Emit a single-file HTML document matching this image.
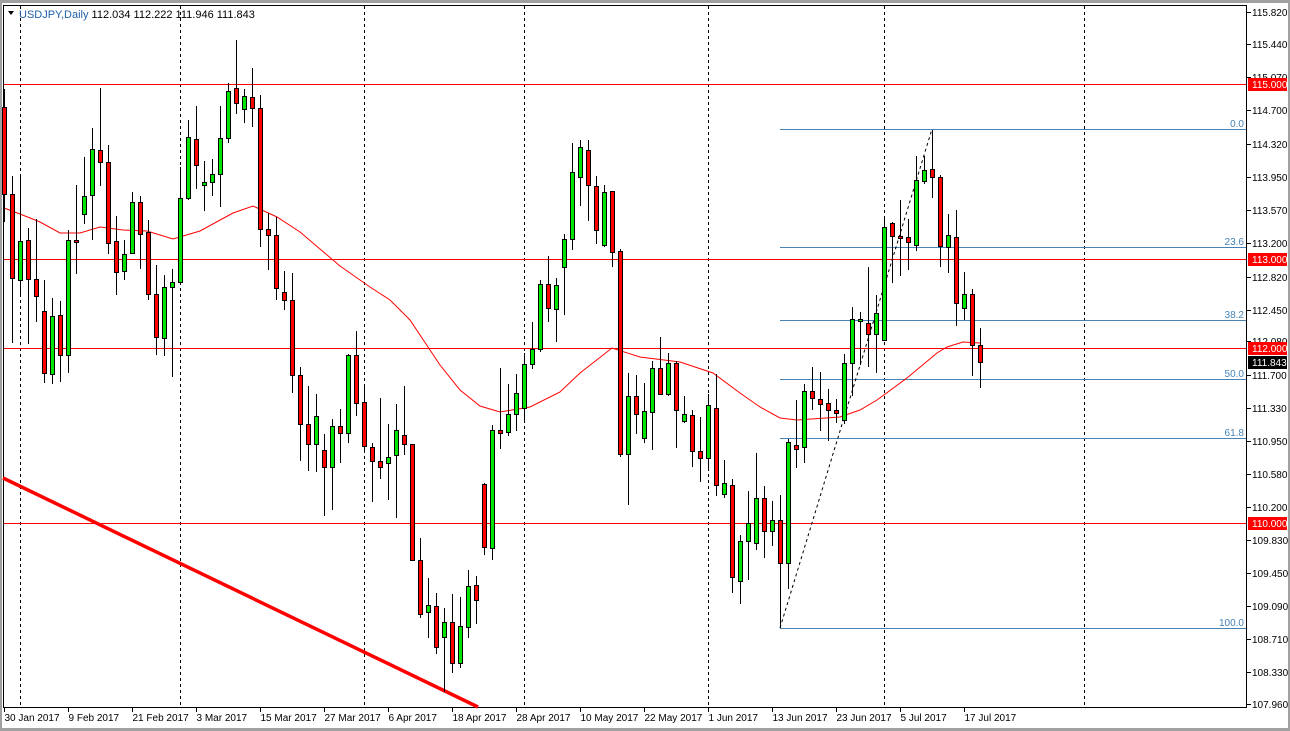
<!DOCTYPE html>
<html><head><meta charset="utf-8">
<style>
html,body{margin:0;padding:0;background:#fff;width:1290px;height:731px;overflow:hidden;}
svg{display:block;font-family:"Liberation Sans",sans-serif;}
</style></head>
<body>
<svg id="c" width="1290" height="731" xmlns="http://www.w3.org/2000/svg">
<rect x="0" y="0" width="1290" height="731" fill="#fff"/>
<rect x="0" y="0" width="1290" height="3" fill="#a0a0a0"/>
<rect x="0" y="728" width="1290" height="3" fill="#a0a0a0"/>
<rect x="0" y="0" width="2" height="731" fill="#a0a0a0"/>
<rect x="1288" y="0" width="2" height="731" fill="#a0a0a0"/>
<line x1="3.5" y1="5" x2="3.5" y2="707" stroke="#000"/>
<line x1="3" y1="5.5" x2="1246" y2="5.5" stroke="#000"/>
<line x1="1246.5" y1="5" x2="1246.5" y2="708" stroke="#000"/>
<line x1="3" y1="707.5" x2="1247" y2="707.5" stroke="#000"/>
<g id="g"></g>
</svg>
<script>
var g=document.getElementById('g');var s='';
[20,180,364,524,708,884,1084].forEach(function(x){s+='<line x1="'+(x+.5)+'" y1="6" x2="'+(x+.5)+'" y2="707" stroke="#000" stroke-dasharray="3,3"/>';});
[84,259,348,523].forEach(function(y){s+='<rect x="4" y="'+y+'" width="1242" height="1" fill="#ff0000"/>';});
var fib=[[129,'0.0'],[247,'23.6'],[320,'38.2'],[379,'50.0'],[438,'61.8'],[628,'100.0']];
fib.forEach(function(f){s+='<line x1="780" y1="'+(f[0]+.5)+'" x2="1246" y2="'+(f[0]+.5)+'" stroke="#4682b4"/>';
s+='<text x="1244" y="'+(f[0]-2)+'" font-size="10" fill="#4682b4" text-anchor="end">'+f[1]+'</text>';});
s+='<line x1="780" y1="628" x2="932" y2="129" stroke="#000" stroke-dasharray="3,3"/>';
s+='<line x1="3" y1="478" x2="478" y2="707" stroke="#f00" stroke-width="3.5"/>';
var ma=[[4,208],[20,214],[40,222],[60,233],[80,233],[100,227],[123,230],[147,231],[173,239],[200,231],[233,213],[253,206],[277,217],[300,232],[340,266],[370,287],[390,300],[410,320],[440,365],[460,390],[480,406],[500,412],[530,407],[560,392],[580,373],[612,348],[640,357],[680,362],[713,373],[740,393],[760,407],[780,418],[797,420],[840,417],[860,410],[877,400],[907,378],[937,353],[947,347],[963,342],[980,343]];
s+='<polyline fill="none" stroke="#f00" points="'+ma.map(function(p){return p.join(',')}).join(' ')+'"/>';
var d=[[107,194,89,222,'r'],[194,278,176,343,'r'],[241,280,177,296,'g'],[240,279,228,344,'r'],[279,296,219,322,'r'],[311,373,280,383,'r'],[316,374,298,384,'g'],[315,355,301,382,'r'],[240,355,230,373,'g'],[240,242,185,274,'r'],
[196,214,157,224,'g'],[149,195,128,240,'g'],[150,162,88,186,'r'],[162,243,145,254,'r'],[241,272,216,295,'r'],[254,271,240,280,'g'],[202,253,192,254,'g'],[202,234,196,269,'r'],[232,294,220,300,'r'],[294,337,265,355,'r'],
[287,338,275,356,'g'],[282,287,269,377,'g'],[198,282,167,283,'g'],[137,198,120,200,'g'],[139,165,106,189,'r'],[182,185,161,211,'g'],[174,182,159,196,'g'],[138,174,106,207,'g'],[91,138,83,143,'g'],[88,103,40,114,'r'],
[96,109,89,123,'g'],[97,108,68,127,'r'],[108,229,95,247,'r'],[229,235,213,270,'r'],[235,288,217,300,'r'],[292,300,271,310,'r'],[300,375,273,393,'r'],[375,424,367,461,'r'],[424,444,386,471,'r'],[416,444,394,472,'g'],
[450,467,434,516,'r'],[426,467,419,510,'g'],[426,433,409,463,'r'],[355,433,354,443,'g'],[355,403,331,416,'r'],[402,446,384,450,'r'],[447,461,443,502,'r'],[461,467,398,479,'r'],[457,463,424,500,'g'],[430,455,404,518,'g'],
[435,444,386,455,'r'],[444,560,444,560,'r'],[560,614,538,618,'r'],[605,612,578,638,'g'],[606,647,593,654,'r'],[622,637,608,692,'g'],[622,663,594,673,'r'],[626,663,597,668,'g'],[586,627,570,638,'g'],[585,600,576,624,'r'],
[484,547,483,555,'r'],[430,548,425,560,'g'],[430,433,368,449,'r'],[414,432,384,436,'g'],[393,414,374,431,'g'],[364,408,353,421,'g'],[349,364,322,369,'g'],[284,349,280,352,'g'],[284,308,256,322,'r'],[285,309,278,342,'g'],
[239,267,234,315,'g'],[172,239,143,250,'g'],[147,177,140,206,'g'],[150,185,140,221,'r'],[186,230,176,244,'r'],[192,245,185,247,'g'],[191,252,191,267,'r'],[251,454,249,457,'r'],[396,454,373,505,'g'],[396,414,375,434,'r'],
[411,438,383,443,'g'],[368,412,361,450,'g'],[368,394,337,394,'r'],[363,394,353,396,'g'],[363,410,361,448,'r'],[414,421,396,423,'g'],[415,451,410,467,'r'],[451,458,417,482,'r'],[405,458,394,469,'g'],[408,485,374,496,'r'],
[483,494,460,498,'g'],[485,577,479,593,'r'],[541,581,535,604,'g'],[523,541,491,580,'g'],[498,543,453,550,'g'],[498,531,486,558,'r'],[520,531,501,546,'g'],[520,563,495,628,'r'],[442,563,439,589,'g'],[445,449,400,468,'r'],
[391,447,384,463,'g'],[391,398,367,410,'r'],[399,404,372,431,'r'],[403,410,389,441,'r'],[410,413,399,423,'r'],[363,420,354,424,'g'],[319,363,307,396,'g'],[319,320,312,365,'g'],[323,334,267,367,'r'],[313,334,295,373,'g'],
[227,340,219,340,'g'],[223,236,222,283,'r'],[236,238,200,276,'r'],[237,242,219,270,'r'],[180,245,156,251,'g'],[170,181,156,184,'g'],[169,177,130,198,'r'],[177,246,175,267,'r'],[235,247,214,273,'g'],[237,303,210,326,'r'],
[294,308,272,320,'g'],[294,345,289,376,'r'],[345,362,328,388,'r']];
d.forEach(function(c,i){var cx=4.5+8*i;
s+='<line x1="'+cx+'" y1="'+c[2]+'" x2="'+cx+'" y2="'+c[3]+'" stroke="#000"/>';
var h=Math.max(c[1]-c[0],2);
s+='<rect x="'+(cx-2)+'" y="'+(c[0]+.5)+'" width="4" height="'+h+'" fill="'+(c[4]=='r'?'#f00':'#00e600')+'" stroke="#000"/>';});
var pl=[['115.820',12],['115.440',44],['115.070',77],['114.700',110],['114.320',144],['113.950',177],['113.570',210],['113.200',243],['112.820',277],['112.450',310],['112.080',341],['111.700',375],['111.330',408],['110.950',441],['110.580',474],['110.200',507],['109.830',540],['109.450',573],['109.090',606],['108.710',639],['108.330',672],['107.960',704]];
pl.forEach(function(p){s+='<line x1="1247" y1="'+(p[1]+.5)+'" x2="1251" y2="'+(p[1]+.5)+'" stroke="#000"/><text x="1252" y="'+(p[1]+4)+'" font-size="10" fill="#000">'+p[0]+'</text>';});
[['115.000',84,'#f00'],['113.000',259,'#f00'],['112.000',348,'#f00'],['111.843',362,'#000'],['110.000',523,'#f00']].forEach(function(p){
s+='<rect x="1248" y="'+(p[1]-6)+'" width="39" height="13" fill="'+p[2]+'"/><text x="1252" y="'+(p[1]+4)+'" font-size="10" fill="#fff">'+p[0]+'</text>';});
var dl=[['30 Jan 2017',4],['9 Feb 2017',68],['21 Feb 2017',132],['3 Mar 2017',196],['15 Mar 2017',260],['27 Mar 2017',324],['6 Apr 2017',388],['18 Apr 2017',452],['28 Apr 2017',516],['10 May 2017',580],['22 May 2017',644],['1 Jun 2017',708],['13 Jun 2017',772],['23 Jun 2017',836],['5 Jul 2017',900],['17 Jul 2017',964]];
dl.forEach(function(p){s+='<line x1="'+(p[1]+.5)+'" y1="708" x2="'+(p[1]+.5)+'" y2="712" stroke="#000"/><text x="'+(p[1]+.5)+'" y="721" font-size="10" fill="#000">'+p[0]+'</text>';});
s+='<polygon points="8,11 14,11 11,15" fill="#000"/>';
s+='<text x="19" y="18" font-size="11" fill="#000"><tspan fill="#1f5fa8">USDJPY,Daily</tspan>  112.034 112.222 111.946 111.843</text>';
g.innerHTML=s;
</script>
</body></html>
